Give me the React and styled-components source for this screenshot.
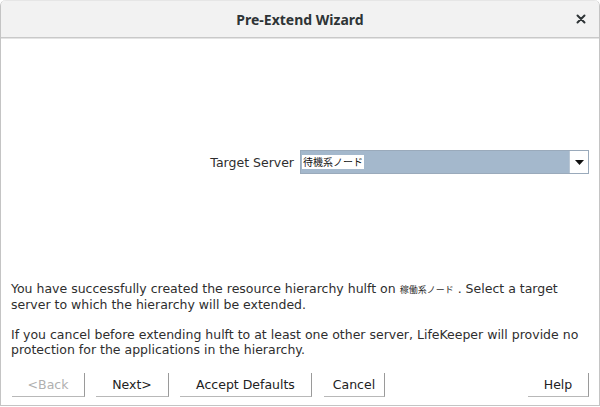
import React, { useState } from 'react';
import styled, { createGlobalStyle } from 'styled-components';

const GlobalStyle = createGlobalStyle`
  html, body {
    margin: 0;
    padding: 0;
    background: #ffffff;
  }
  body {
    font-family: 'DejaVu Sans', sans-serif;
    color: #2e2e2e;
  }
`;

const Window = styled.div`
  width: 600px;
  height: 406px;
  box-sizing: border-box;
  display: flex;
  flex-direction: column;
  background: #fff;
  border: 1px solid #c4c4c4;
  border-top: none;
  border-radius: 6px 6px 0 0;
  overflow: hidden;
`;

const TitleBar = styled.header`
  height: 36px;
  flex: 0 0 36px;
  display: grid;
  grid-template-columns: 1fr auto 1fr;
  align-items: center;
  background: #f2f2f2;
  border-top: 1px solid #e6e6e6;
  border-bottom: 1px solid #c9c9c9;
  box-shadow: 0 1px 0 #e4e4e4;
`;

const Title = styled.h1`
  grid-column: 2;
  margin: 0;
  font-family: 'Noto Sans', 'DejaVu Sans', sans-serif;
  font-size: 14px;
  font-weight: 700;
  color: #2e3436;
`;

const CloseButton = styled.button`
  grid-column: 3;
  justify-self: end;
  margin-right: 10px;
  width: 16px;
  height: 16px;
  padding: 0;
  border: none;
  background: transparent;
  display: flex;
  align-items: center;
  justify-content: center;
  cursor: pointer;
`;

const Body = styled.main`
  flex: 1;
  display: flex;
  flex-direction: column;
  padding: 0 10px 8px 10px;
`;

const ServerRow = styled.div`
  display: flex;
  align-items: center;
  justify-content: flex-end;
  gap: 6px;
  margin-top: 112px;
`;

const Label = styled.label`
  font-size: 12.5px;
  color: #2e2e2e;
`;

const Combo = styled.div`
  width: 289px;
  height: 24px;
  box-sizing: border-box;
  display: flex;
  border: 1px solid #9aaabb;
  background: #a4b8cc;
`;

const ComboValue = styled.div`
  flex: 1;
  display: flex;
  align-items: center;
  padding-left: 1px;
`;

const Selected = styled.span`
  background: #fff;
  color: #111;
  font-family: 'Noto Sans CJK JP', sans-serif;
  font-size: 10px;
  line-height: 14px;
  padding: 0 1px;
`;

const ArrowButton = styled.div`
  width: 18px;
  background: #fff;
  border-left: 1px solid #b8c6d4;
  display: flex;
  align-items: center;
  justify-content: center;
`;

const Message = styled.div`
  margin-top: 107px;
  padding-right: 8px;
  font-size: 12.5px;
  line-height: 15px;
  color: #2e2e2e;
`;

const Para = styled.p`
  margin: 0 0 15px 0;
`;

const Jp = styled.span`
  font-family: 'Noto Sans CJK JP', sans-serif;
  font-size: 9px;
  line-height: 15px;
`;

const ButtonBar = styled.div`
  display: flex;
  align-items: center;
  margin-top: auto;
  padding-left: 1px;
`;

const Button = styled.button`
  height: 24px;
  width: ${({ w }) => w}px;
  margin-right: ${({ gap }) => gap || 0}px;
  margin-left: ${({ push }) => (push ? 'auto' : '0')};
  box-sizing: border-box;
  padding: 0 0 1px 0;
  background: #fff;
  border: none;
  border-right: 1px solid #9a9a9a;
  border-bottom: 1px solid #b8b8b8;
  font-family: 'DejaVu Sans', sans-serif;
  font-size: 12.5px;
  color: ${({ disabled }) => (disabled ? '#b0b0b0' : '#222')};
  cursor: pointer;
`;

function App() {
  const [server] = useState('待機系ノード');

  return (
    <>
      <GlobalStyle />
      <Window>
        <TitleBar>
          <Title>Pre-Extend Wizard</Title>
          <CloseButton aria-label="Close">
            <svg width="10" height="10" viewBox="0 0 10 10">
              <path d="M1.5 1.5 L8.5 8.5 M8.5 1.5 L1.5 8.5" stroke="#2e3436" strokeWidth="2" strokeLinecap="round" />
            </svg>
          </CloseButton>
        </TitleBar>
        <Body>
          <ServerRow>
            <Label>Target Server</Label>
            <Combo>
              <ComboValue>
                <Selected>{server}</Selected>
              </ComboValue>
              <ArrowButton>
                <svg width="9" height="5" viewBox="0 0 9 5">
                  <path d="M0 0 H9 L4.5 5 Z" fill="#111" />
                </svg>
              </ArrowButton>
            </Combo>
          </ServerRow>
          <Message>
            <Para>
              You have successfully created the resource hierarchy hulft on <Jp>稼働系ノード</Jp> . Select a target server to which the hierarchy will be extended.
            </Para>
            <Para>
              If you cancel before extending hulft to at least one other server, LifeKeeper will provide no protection for the applications in the hierarchy.
            </Para>
          </Message>
          <ButtonBar>
            <Button w={73} gap={11} disabled>&lt;Back</Button>
            <Button w={73} gap={11}>Next&gt;</Button>
            <Button w={132} gap={12}>Accept Defaults</Button>
            <Button w={61}>Cancel</Button>
            <Button w={61} push>Help</Button>
          </ButtonBar>
        </Body>
      </Window>
    </>
  );
}

export default App;
